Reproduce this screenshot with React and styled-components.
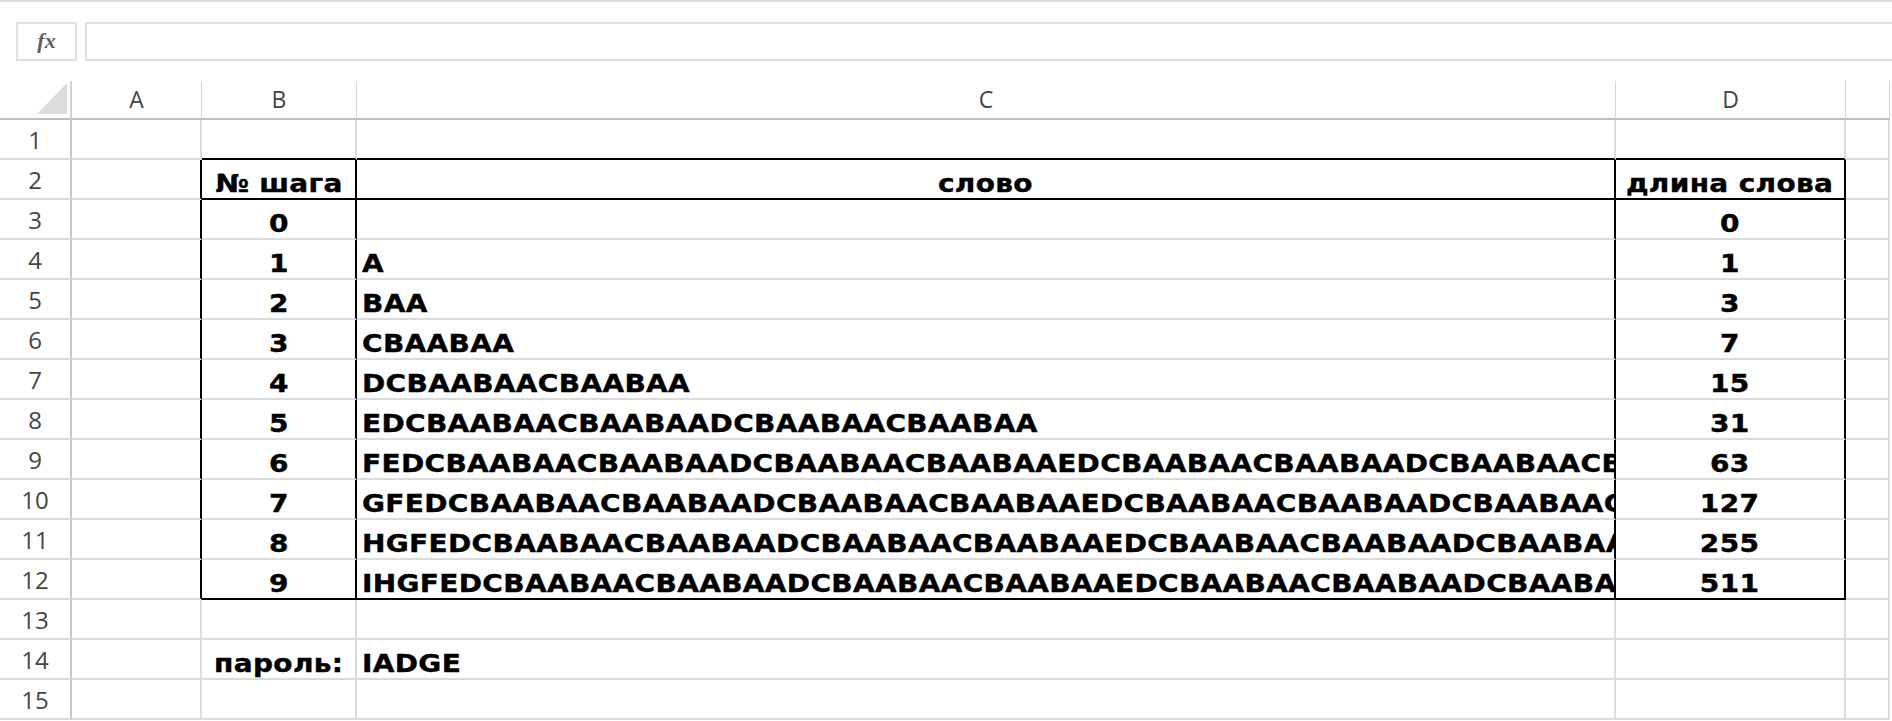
import React from "react";
import styled, { createGlobalStyle } from "styled-components";

const GlobalStyle = createGlobalStyle`
  html, body {
    margin: 0;
    padding: 0;
    background: #fff;
    overflow: hidden;
  }
  * {
    box-sizing: border-box;
  }
`;

const COLUMNS = ["A", "B", "C", "D", ""];

// each step: letter + previous word twice
const buildWords = () => {
  const words = [""];
  for (let i = 1; i <= 9; i++) {
    const prev = words[i - 1];
    words.push(String.fromCharCode(64 + i) + prev + prev);
  }
  return words;
};

const WORDS = buildWords();

const buildRows = () => {
  const rows = [];
  for (let r = 1; r <= 15; r++) {
    let cells = ["", "", "", "", ""];
    let align = ["center", "center", "center", "center", "center"];
    if (r === 2) {
      cells = ["", "№ шага", "слово", "длина слова", ""];
    } else if (r >= 3 && r <= 12) {
      const step = r - 3;
      cells = ["", String(step), WORDS[step], String(WORDS[step].length), ""];
      align[2] = "left";
    } else if (r === 14) {
      cells = ["", "пароль:", "IADGE", "", ""];
      align[2] = "left";
    }
    rows.push({ r, cells, align });
  }
  return rows;
};

const ROWS = buildRows();

export default function App() {
  return (
    <>
      <GlobalStyle />
      <Page>
        <FormulaBar>
          <FxBox>
            <span>f</span>
            <span>x</span>
          </FxBox>
          <FormulaInput />
        </FormulaBar>
        <Sheet>
          <Corner>
            <Triangle />
          </Corner>
          {COLUMNS.map((c, i) => (
            <ColHead key={i}>{c}</ColHead>
          ))}
          {ROWS.map((row) => {
            const inTable = row.r >= 2 && row.r <= 12;
            const boxEdge = row.r === 1 || row.r === 2 || row.r === 12;
            return (
              <React.Fragment key={row.r}>
                <RowNum>{row.r}</RowNum>
                {row.cells.map((text, c) => (
                  <Cell
                    key={c}
                    $align={row.align[c]}
                    $edgeRight={inTable && c <= 3}
                    $edgeBottom={boxEdge && c >= 1 && c <= 3}
                  >
                    {text && <CellText $align={row.align[c]}>{text}</CellText>}
                  </Cell>
                ))}
              </React.Fragment>
            );
          })}
        </Sheet>
      </Page>
    </>
  );
}

const Page = styled.div`
  width: 1892px;
  height: 721px;
  display: flex;
  flex-direction: column;
  background: #fff;
  overflow: hidden;
`;

const FormulaBar = styled.div`
  height: 81px;
  flex-shrink: 0;
  border-top: 2px solid #dcdcdc;
  display: flex;
  align-items: flex-start;
  gap: 8px;
  padding: 20px 0 0 16px;
`;

const FxBox = styled.div`
  width: 61px;
  height: 39px;
  border: 2px solid #e1e1e1;
  display: flex;
  align-items: center;
  justify-content: center;
  padding-bottom: 2px;
  font-family: "Liberation Serif", serif;
  font-style: italic;
  font-weight: bold;
  font-size: 22px;
  color: #5f5f5f;
`;

const FormulaInput = styled.div`
  flex: 1;
  height: 39px;
  border: 2px solid #e1e1e1;
  border-right: none;
`;

const Sheet = styled.div`
  display: grid;
  grid-template-columns: 72px 130px 155px 1259px 230px 44px;
  grid-template-rows: 39px repeat(15, 40px);
`;

const Corner = styled.div`
  border-right: 2px solid #d0d0d0;
  border-bottom: 2px solid #bdbdbd;
  display: flex;
  align-items: flex-end;
  justify-content: flex-end;
  padding: 0 3px 4px 0;
`;

const Triangle = styled.div`
  width: 0;
  height: 0;
  border-left: 30px solid transparent;
  border-bottom: 31px solid #dcdcdc;
`;

const ColHead = styled.div`
  border-right: 1px solid #d6d6d6;
  border-bottom: 2px solid #bdbdbd;
  display: flex;
  align-items: center;
  justify-content: center;
  font-family: "Open Sans", "Noto Sans", sans-serif;
  font-size: 23px;
  line-height: 23px;
  color: #444;
`;

const RowNum = styled.div`
  border-right: 2px solid #c6c6c6;
  border-bottom: 2px solid #dadada;
  display: flex;
  align-items: center;
  justify-content: center;
  padding-top: 2px;
  font-family: "Open Sans", "Noto Sans", sans-serif;
  font-size: 24px;
  line-height: 24px;
  color: #444;
`;

const Cell = styled.div`
  display: flex;
  align-items: flex-end;
  justify-content: ${(p) => (p.$align === "left" ? "flex-start" : "center")};
  padding: ${(p) => (p.$align === "left" ? "0 0 2px 5px" : "0 0 2px 0")};
  border-right: 2px solid ${(p) => (p.$edgeRight ? "#000" : "#dadada")};
  border-bottom: 2px solid ${(p) => (p.$edgeBottom ? "#000" : "#dadada")};
  overflow: hidden;
  white-space: nowrap;
`;

const CellText = styled.span`
  display: inline-block;
  flex-shrink: 0;
  font-family: "DejaVu Sans", Verdana, sans-serif;
  font-weight: bold;
  font-size: 25px;
  line-height: 25px;
  letter-spacing: 0.3px;
  color: #000;
  -webkit-text-stroke: 0.4px #000;
  transform: scaleX(1.12);
  transform-origin: ${(p) => (p.$align === "left" ? "left bottom" : "center bottom")};
`;
